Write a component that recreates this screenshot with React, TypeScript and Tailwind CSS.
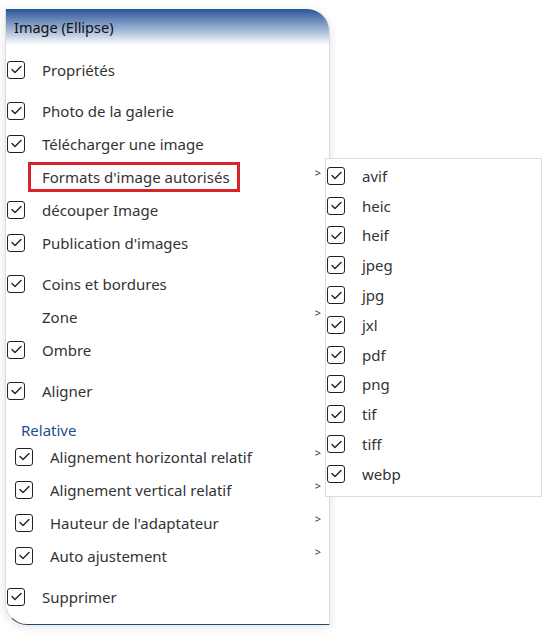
import React from "react";

const Check = () => (
  <span className="flex h-[18px] w-[18px] shrink-0 items-center justify-center rounded-[3px] border-[1.5px] border-[#222] bg-white">
    <svg width="13" height="13" viewBox="0 0 13 13" fill="none">
      <path d="M2 6.5 L5 9.5 L11 3.5" stroke="#222" strokeWidth="1.4" strokeLinecap="round" strokeLinejoin="round" />
    </svg>
  </span>
);

const Chevron = () => (
  <span className="absolute right-[8px] top-[7px] text-[11px] leading-none text-[#333]">&gt;</span>
);

type RowProps = { label: string; check?: boolean; chevron?: boolean; indent?: boolean; mt?: boolean };

const Row = ({ label, check = true, chevron = false, indent = false, mt = false }: RowProps) => (
  <div className={`relative flex h-[33px] items-center ${mt ? "mt-[8px]" : ""} ${indent ? "pl-[9px]" : "pl-[1px]"}`}>
    {check ? <Check /> : <span className="w-[18px] shrink-0" />}
    <span className="ml-[17px] text-[15px] leading-[20px] text-[#333]">{label}</span>
    {chevron && <Chevron />}
  </div>
);

const formats = ["avif", "heic", "heif", "jpeg", "jpg", "jxl", "pdf", "png", "tif", "tiff", "webp"];

export default function App() {
  return (
    <div className="relative h-[636px] w-[545px] bg-white" style={{ fontFamily: "'Noto Sans', Lato, sans-serif" }}>
      <div className="absolute left-[5px] top-[9px] h-[616px] w-[325px] rounded-tr-[22px] rounded-bl-[22px] border-x border-b border-x-[#dcdcdc] border-b-[#1f4a78] bg-white shadow-[0_2px_10px_rgba(0,0,0,0.12)]">
        <div className="flex h-[36px] items-center rounded-tr-[22px] bg-gradient-to-b from-[#2a5598] to-white pl-[8px] text-[14.5px] leading-[20px] text-[#111]">
          Image (Ellipse)
        </div>
        <div className="mt-[8px] flex flex-col">
          <Row label="Propriétés" />
          <Row label="Photo de la galerie" mt />
          <Row label="Télécharger une image" />
          <div className="relative flex h-[33px] items-center pl-[22px]">
            <div className="flex h-[30px] w-[212px] items-center border-[3px] border-[#d9232a] pl-[11px]">
              <span className="text-[15px] leading-[20px] text-[#333]">Formats d'image autorisés</span>
            </div>
            <Chevron />
          </div>
          <Row label="découper Image" />
          <Row label="Publication d'images" />
          <Row label="Coins et bordures" mt />
          <Row label="Zone" check={false} chevron />
          <Row label="Ombre" />
          <Row label="Aligner" mt />
          <div className="mt-[8px] h-[25px] pl-[15px] pt-[5px] text-[15px] leading-[20px] text-[#1f4e8c]">Relative</div>
          <Row label="Alignement horizontal relatif" indent chevron />
          <Row label="Alignement vertical relatif" indent chevron />
          <Row label="Hauteur de l'adaptateur" indent chevron />
          <Row label="Auto ajustement" indent chevron />
          <Row label="Supprimer" mt />
        </div>
      </div>
      <div className="absolute left-[325px] top-[158px] flex h-[339px] w-[217px] flex-col border border-[#dcdcdc] bg-white pt-[2px]">
        {formats.map((f) => (
          <div key={f} className="flex h-[29.8px] items-center pl-[1px]">
            <Check />
            <span className="ml-[17px] text-[15px] leading-[20px] text-[#333]">{f}</span>
          </div>
        ))}
      </div>
    </div>
  );
}
